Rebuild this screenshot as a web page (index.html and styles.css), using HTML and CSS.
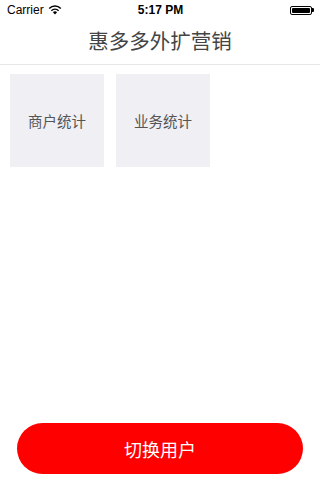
FILE: index.html
```html
<!DOCTYPE html>
<html>
<head>
<meta charset="utf-8">
<link rel="stylesheet" href="styles.css">
</head>
<body>
<div class="app">
  <div class="status">
    <div class="status-left">Carrier
      <svg class="wifi" width="14" height="10" viewBox="0 0 14 10"><path d="M7 9.5 L4.9 7.2 A3 3 0 0 1 9.1 7.2 Z" fill="#000"/><path d="M3.4 5.7 A5.2 5.2 0 0 1 10.6 5.7" stroke="#000" stroke-width="1.5" fill="none"/><path d="M1.2 3.5 A8.2 8.2 0 0 1 12.8 3.5" stroke="#000" stroke-width="1.5" fill="none"/></svg>
    </div>
    <div class="status-time">5:17 PM</div>
    <div class="status-right">
      <div class="battery"><div class="battery-fill"></div></div><div class="battery-tip"></div>
    </div>
  </div>
  <div class="nav">惠多多外扩营销</div>
  <div class="tiles">
    <div class="tile">商户统计</div>
    <div class="tile">业务统计</div>
  </div>
  <div class="spacer"></div>
  <div class="footer">
    <div class="btn">切换用户</div>
  </div>
</div>
</body>
</html>
```
FILE: styles.css
```css
html, body { margin: 0; padding: 0; }
body { width: 320px; height: 480px; background: #fff; font-family: "Liberation Sans", "Noto Sans CJK SC", sans-serif; overflow: hidden; }
.app { display: flex; flex-direction: column; height: 480px; }
.status { height: 20px; display: flex; align-items: center; justify-content: space-between; padding: 0 6px 0 7px; font-size: 12px; color: #000; }
.status-left { display: flex; align-items: center; gap: 4px; width: 80px; }
.wifi { margin-top: -1px; }
.status-time { font-weight: bold; font-size: 12px; }
.status-right { width: 80px; display: flex; justify-content: flex-end; align-items: center; }
.battery { width: 22px; height: 9px; border: 1px solid #000; border-radius: 2px; padding: 1px; box-sizing: border-box; display: flex; }
.battery-fill { flex: 1; background: #000; border-radius: 1px; }
.battery-tip { width: 1.5px; height: 4px; background: #000; border-radius: 0 1px 1px 0; }
.nav { height: 45px; box-sizing: border-box; border-bottom: 1px solid #e8e8e8; display: flex; align-items: center; justify-content: center; font-size: 20.5px; color: #444; font-family: "Noto Sans CJK SC", sans-serif; padding-bottom: 4px; }
.tiles { display: flex; gap: 12px; padding: 9px 10px 0; }
.tile { width: 94px; height: 93px; background: #efeff4; display: flex; align-items: center; justify-content: center; font-size: 14.5px; color: #555; font-family: "Noto Sans CJK SC", sans-serif; }
.spacer { flex: 1; }
.footer { padding: 0 17px 6px; }
.btn { height: 51px; border-radius: 26px; background: #ff0000; color: #fff; display: flex; align-items: center; justify-content: center; font-size: 18px; font-family: "Noto Sans CJK SC", sans-serif; }
```
